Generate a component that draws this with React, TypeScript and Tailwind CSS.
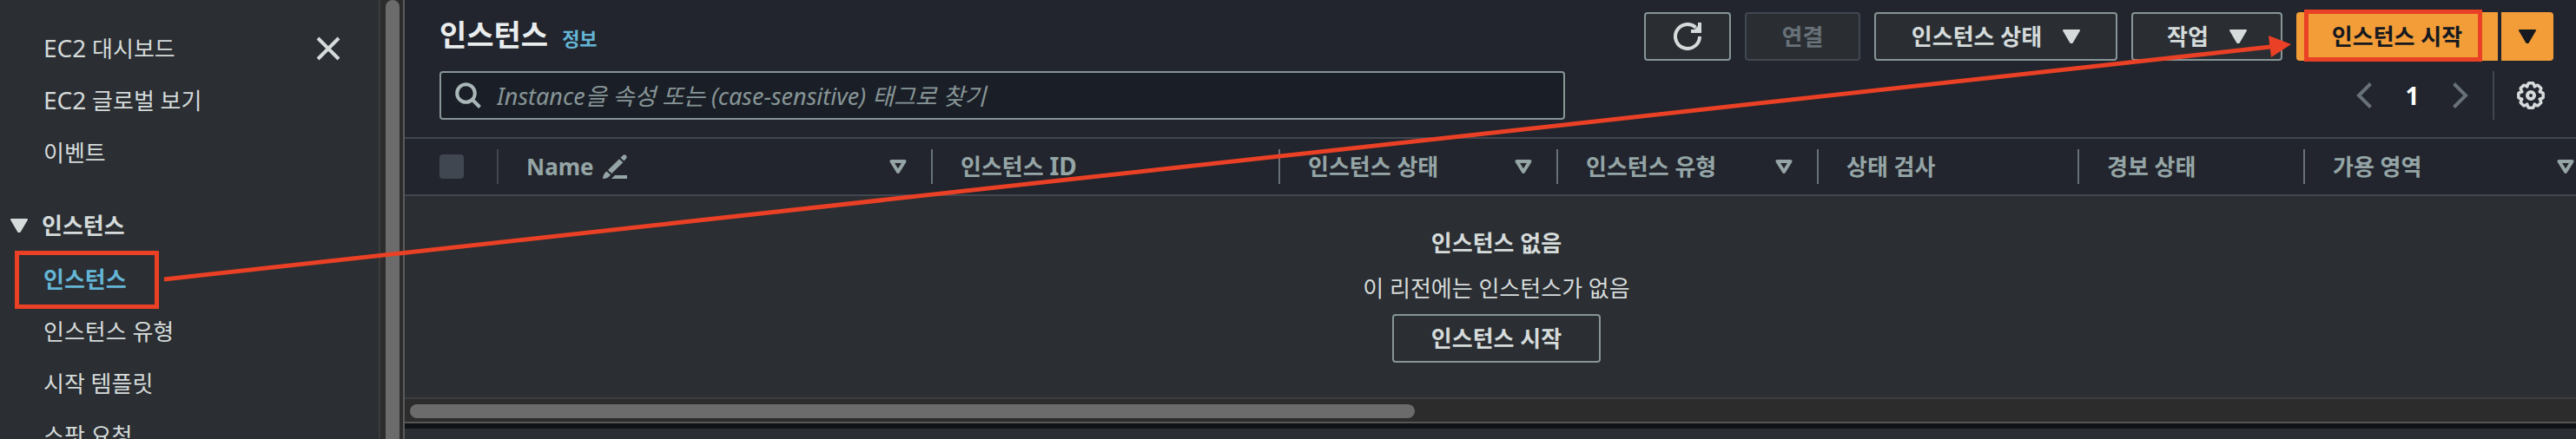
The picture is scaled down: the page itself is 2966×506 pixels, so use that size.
import React from "react";

type Column = { label: React.ReactNode; width: string; filter?: boolean; editable?: boolean };

const Latin = ({ children }: { children: React.ReactNode }) => <span className="text-[28px] leading-none">{children}</span>;

const columns: Column[] = [
  { label: "Name", width: "w-[500px]", filter: true, editable: true },
  { label: <>인스턴스 <Latin>ID</Latin></>, width: "w-[400px]" },
  { label: "인스턴스 상태", width: "w-[320px]", filter: true },
  { label: "인스턴스 유형", width: "w-[300px]", filter: true },
  { label: "상태 검사", width: "w-[300px]" },
  { label: "경보 상태", width: "w-[260px]" },
  { label: "가용 영역", width: "w-[340px]", filter: true },
];

const Caret = () => (
  <svg className="h-[18px] w-5 shrink-0" viewBox="0 0 20 18" fill="currentColor" stroke="currentColor" strokeWidth="2" strokeLinejoin="round" aria-hidden="true">
    <path d="M1 2h18l-8.2 14h-1.6z" />
  </svg>
);

const FilterCaret = () => (
  <svg className="h-[18px] w-5 shrink-0" viewBox="0 0 20 18" fill="none" stroke="currentColor" strokeWidth="4" strokeLinejoin="round" aria-hidden="true">
    <path d="M2.500 3h15L10 15z" />
  </svg>
);

const Pencil = () => (
  <svg className="h-7 w-7" viewBox="0 0 28 28" fill="currentColor" aria-hidden="true">
    <path d="M23.300 1q1.700-1.700 3.400 0t.300 3.800L24.500 7.500 20.500 3.800zM19 5.300l4.300 4L10.300 22 6 18zM4.500 19.500l4.500 4Q6 28 0 28 .5 22 4.500 19.500zM14 24h14v4H10z" />
  </svg>
);

/* Eight-toothed outline: each tooth is a flat top between two shallow valleys. */
const gearPoints = Array.from({ length: 8 }, (_, tooth) =>
  [
    [-15, 13.2],
    [-10, 14.4],
    [10, 14.4],
    [15, 13.2],
    [22.5, 11],
  ].map(([offset, radius]) => {
    const angle = ((tooth * 45 + offset) * Math.PI) / 180;
    return `${(16 + radius * Math.sin(angle)).toFixed(2)},${(16 - radius * Math.cos(angle)).toFixed(2)}`;
  }).join(" "),
).join(" ");

function SideLink({ children, active = false }: { children: React.ReactNode; active?: boolean }) {
  return (
    <li className="h-10">
      <a href="#" className={active ? "block font-bold text-[#64b5d6]" : "block"}>
        {children}
      </a>
    </li>
  );
}

function Sidebar() {
  return (
    <nav aria-label="EC2" className="relative w-[436px] shrink-0 overflow-hidden pl-[50px]">
      <div className="flex items-start justify-between pt-9 pr-[44px]">
        <ul className="flex flex-col gap-5">
          <SideLink><Latin>EC2</Latin> 대시보드</SideLink>
          <SideLink><Latin>EC2</Latin> 글로벌 보기</SideLink>
          <SideLink>이벤트</SideLink>
        </ul>
        <button type="button" aria-label="닫기" className="mt-[6px]">
          <svg className="h-7 w-7" viewBox="0 0 28 28" stroke="currentColor" strokeWidth="4" fill="none">
            <path d="M2 2l24 24M26 2L2 26" />
          </svg>
        </button>
      </div>
      <button type="button" className="-ml-[38px] mt-11 flex items-center gap-4 font-bold leading-10">
        <Caret />
        인스턴스
      </button>
      <ul className="mt-[22px] flex flex-col gap-5">
        <SideLink active>인스턴스</SideLink>
        <SideLink>인스턴스 유형</SideLink>
        <SideLink>시작 템플릿</SideLink>
        <SideLink>스팟 요청</SideLink>
      </ul>
    </nav>
  );
}

const outline = "flex h-14 items-center justify-center rounded-[4px] border-2 font-bold";

function Toolbar() {
  return (
    <header className="flex flex-col gap-3 border-b-2 border-[#414750] bg-[#22252d] pt-[14px] pr-[26px] pb-5 pl-10">
      <div className="flex h-14 items-center justify-between">
        <div className="flex items-baseline gap-4">
          <h1 className="text-[34px] font-bold text-[#eaeded]">인스턴스</h1>
          <a href="#" className="text-[22px] font-bold text-[#64b5d6]">정보</a>
        </div>
        <div className="flex gap-4">
          <button type="button" aria-label="새로 고침" className={`${outline} w-[100px] border-[#879596] bg-[#2a2e33]`}>
            <svg className="h-8 w-8" viewBox="0 0 32 32" fill="none" stroke="currentColor" strokeWidth="4">
              <path d="M30 16a14 14 0 1 1-4.500-10.300" />
              <path d="M20 8h4l4-4V0h4v12H20z" fill="currentColor" stroke="none" />
            </svg>
          </button>
          <button type="button" disabled className={`${outline} w-[133px] border-[#414750] bg-[#2a2e33] text-[#687078]`}>연결</button>
          <button type="button" className={`${outline} w-[280px] gap-6 border-[#879596] bg-[#2a2e33]`}>인스턴스 상태<Caret /></button>
          <button type="button" className={`${outline} w-[174px] gap-6 border-[#879596] bg-[#2a2e33]`}>작업<Caret /></button>
          <div className="flex gap-1 font-bold text-[#16191f]">
            <button type="button" className="h-14 w-[232px] rounded-l-[4px] bg-[#f29d38]">인스턴스 시작</button>
            <button type="button" aria-label="시작 옵션" className="flex h-14 w-[60px] items-center justify-center rounded-r-[4px] bg-[#f29d38]"><Caret /></button>
          </div>
        </div>
      </div>
      <div className="flex h-14 items-center justify-between">
        <label className="flex h-14 w-[1296px] items-center gap-[18px] rounded-[4px] border-2 border-[#879596] bg-[#1a1f27] pl-4">
          <svg className="h-[30px] w-[30px] shrink-0 text-[#aab7b8]" viewBox="0 0 30 30" fill="none" stroke="currentColor" strokeWidth="4" aria-hidden="true">
            <circle cx="12.500" cy="12.500" r="10.300" />
            <path d="M19.500 19.500l9 9" />
          </svg>
          <input type="search" aria-label="인스턴스 찾기" placeholder="Instance을 속성 또는 (case-sensitive) 태그로 찾기" className="h-full w-full bg-transparent text-[27px] italic outline-none placeholder:text-[#879596] placeholder:opacity-100" />
        </label>
        <div className="flex h-14 items-center pr-[10px]">
          <button type="button" aria-label="이전 페이지" className="text-[#687078]">
            <svg className="h-[30px] w-[18px]" viewBox="0 0 18 30" fill="none" stroke="currentColor" strokeWidth="4"><path d="M16.500 1.500L3 15l13.500 13.500" /></svg>
          </button>
          <span className="w-[93px] text-center text-[28px] font-bold text-white">1</span>
          <button type="button" aria-label="다음 페이지" className="text-[#687078]">
            <svg className="h-[30px] w-[18px]" viewBox="0 0 18 30" fill="none" stroke="currentColor" strokeWidth="4"><path d="M1.500 1.500L15 15 1.500 28.500" /></svg>
          </button>
          <div className="ml-7 h-14 w-[2px] bg-[#414750]" />
          <button type="button" aria-label="기본 설정" className="ml-[26px]">
            <svg className="h-8 w-8" viewBox="0 0 32 32" fill="none" stroke="currentColor" strokeWidth="4" strokeLinejoin="round">
              <polygon points={gearPoints} strokeWidth="3.500" />
              <circle cx="16" cy="16" r="4" />
            </svg>
          </button>
        </div>
      </div>
    </header>
  );
}

function InstanceTable() {
  return (
    <div className="overflow-hidden">
      <table className="w-[2528px] table-fixed border-separate border-spacing-0">
        <thead>
          <tr className="h-16 bg-[#22252d] text-[#95a5a6]">
            <th className="w-[108px] p-0">
              <div className="flex h-10 items-center border-r-2 border-[#414750] pl-10">
                <input type="checkbox" disabled aria-label="모두 선택" className="h-7 w-7 appearance-none rounded-[4px] bg-[#414750]" />
              </div>
            </th>
            {columns.map((column, index) => (
              <th key={index} className={`${column.width} p-0 text-left font-bold`}>
                <div className="flex h-10 items-center justify-between border-r-2 border-[#687078] pr-7 pl-8">
                  <span className="flex items-center gap-[10px] whitespace-pre">
                    <span>{column.label}</span>
                    {column.editable && <Pencil />}
                  </span>
                  {column.filter && <FilterCaret />}
                </div>
              </th>
            ))}
          </tr>
        </thead>
        <tbody>
          <tr>
            <td colSpan={8} className="border-t-2 border-[#414750] pt-[34px] pr-[14px] pb-10 text-center">
              <p className="font-bold">인스턴스 없음</p>
              <p className="mt-3">이 리전에는 인스턴스가 없음</p>
              <button type="button" className={`${outline} mx-auto mt-[10px] w-[240px] border-[#879596]`}>인스턴스 시작</button>
            </td>
          </tr>
        </tbody>
      </table>
    </div>
  );
}

function Annotations() {
  return (
    <svg className="pointer-events-none absolute top-0 left-0 w-full" viewBox="0 0 2966 506" fill="none" stroke="#ea4025" strokeWidth="5" aria-hidden="true">
      <rect x="19.500" y="291.500" width="161" height="62" />
      <rect x="2655.500" y="13.500" width="200" height="55" />
      <path d="M189 322L2614 54" />
      <path d="M2638 51l-26-10 3 25z" fill="#ea4025" stroke="none" />
    </svg>
  );
}

export default function App() {
  return (
    <div className="relative flex h-screen w-full overflow-hidden bg-[#2b2e32] font-['Noto_Sans','Noto_Sans_CJK_KR',sans-serif] text-[26px] leading-10 text-[#d5dbdb]">
      <Sidebar />
      <div className="w-[30px] shrink-0 border-r-2 border-l-2 border-l-[#3c3c3c] border-r-[#5a5a5a] bg-[#2c2c2c] pl-[6px]">
        <div className="h-[110%] w-4 rounded-full bg-[#6b6b6b]" />
      </div>
      <main className="flex min-w-0 flex-1 flex-col">
        <Toolbar />
        <InstanceTable />
        <div className="h-[30px] shrink-0 border-t-2 border-b-2 border-t-[#3c3c3c] border-b-[#555555] bg-[#2c2c2c] pt-[6px] pl-[6px]">
          <div className="h-4 w-[1157px] rounded-full bg-[#6b6b6b]" />
        </div>
        <div className="h-[6px] shrink-0 bg-[#0f1216]" />
      </main>
      <Annotations />
    </div>
  );
}
